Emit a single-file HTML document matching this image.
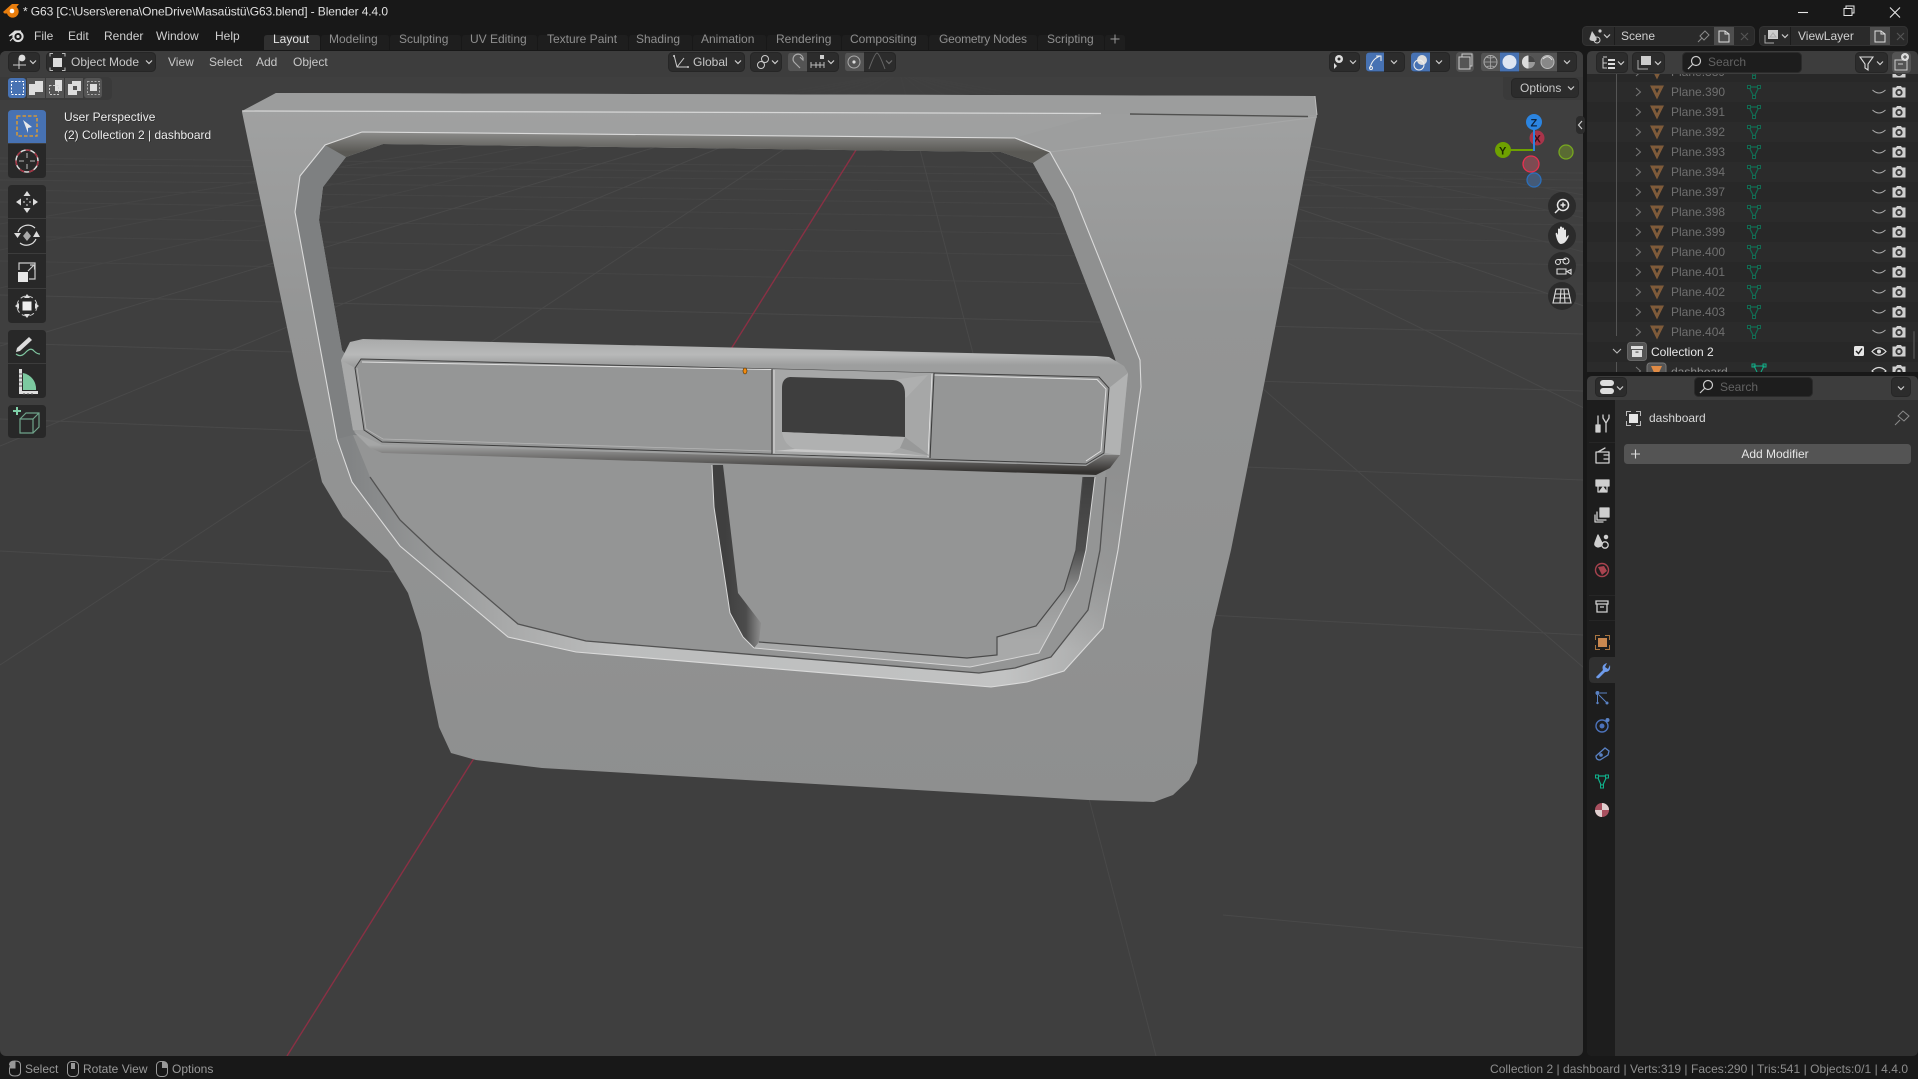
<!DOCTYPE html>
<html lang="en">
<head>
<meta charset="utf-8">
<title>G63 - Blender 4.4.0</title>
<style>
html,body{margin:0;padding:0;background:#181818;width:1918px;height:1079px;overflow:hidden}
svg{display:block;position:absolute;left:0;top:0}
text{font-family:"Liberation Sans",sans-serif;font-size:12px;fill:#c8c8c8}
.tab{fill:#8f8f8f}
.m{fill:#cfcfcf}
.p{fill:#6f6f6f}
.ic{fill:none;stroke:#cfcfcf;stroke-width:1.3;stroke-linecap:round;stroke-linejoin:round}
.blue{fill:#4772b3}
.tool{fill:#282828}
.g1{stroke:#494949;stroke-width:1;fill:none}
.g2{stroke:#454545;stroke-width:1;fill:none}
</style>
</head>
<body>
<svg width="1918" height="1079" viewBox="0 0 1918 1079" xmlns="http://www.w3.org/2000/svg">
<defs>
<linearGradient id="door" x1="0" y1="110" x2="0" y2="800" gradientUnits="userSpaceOnUse"><stop offset="0" stop-color="#a0a1a1"/><stop offset=".3" stop-color="#949595"/><stop offset="1" stop-color="#8e8f8f"/></linearGradient>
<linearGradient id="topBev" x1="0" y1="132" x2="0" y2="152" gradientUnits="userSpaceOnUse"><stop offset="0" stop-color="#8c8c8a"/><stop offset="1" stop-color="#5a5955"/></linearGradient>
<linearGradient id="band" x1="350" y1="0" x2="1120" y2="0" gradientUnits="userSpaceOnUse"><stop offset="0" stop-color="#828485"/><stop offset=".2" stop-color="#a8a9a9"/><stop offset=".35" stop-color="#bcbdbd"/><stop offset=".85" stop-color="#c2c3c3"/><stop offset="1" stop-color="#a4a5a5"/></linearGradient>
<linearGradient id="bandR" x1="0" y1="470" x2="0" y2="650" gradientUnits="userSpaceOnUse"><stop offset="0" stop-color="#8f9090"/><stop offset=".6" stop-color="#8f9090" stop-opacity=".7"/><stop offset="1" stop-color="#8f9090" stop-opacity="0"/></linearGradient>
<linearGradient id="bar" x1="0" y1="339" x2="0" y2="365" gradientUnits="userSpaceOnUse"><stop offset="0" stop-color="#a9aaaa"/><stop offset=".6" stop-color="#b8b9b9"/><stop offset="1" stop-color="#9d9e9e"/></linearGradient>
<linearGradient id="under" x1="0" y1="445" x2="0" y2="472" gradientUnits="userSpaceOnUse"><stop offset="0" stop-color="#a5a6a6"/><stop offset=".5" stop-color="#6b6a69"/><stop offset="1" stop-color="#33312f"/></linearGradient>
<linearGradient id="rGroove" x1="0" y1="477" x2="0" y2="640" gradientUnits="userSpaceOnUse"><stop offset="0" stop-color="#3f3f3f"/><stop offset=".45" stop-color="#4e4e4e"/><stop offset=".75" stop-color="#9a9b9b"/><stop offset="1" stop-color="#a8a9a9"/></linearGradient>
<linearGradient id="lGroove" x1="725" y1="0" x2="760" y2="0" gradientUnits="userSpaceOnUse"><stop offset="0" stop-color="#3f3f3f"/><stop offset=".6" stop-color="#4c4c4c"/><stop offset="1" stop-color="#8a8a8a"/></linearGradient>
<clipPath id="vp"><rect x="0" y="51" width="1583" height="1005" rx="6"/></clipPath>
<clipPath id="ol"><rect x="1587" y="74" width="331" height="298"/></clipPath>
<symbol id="tri" viewBox="0 0 16 16" width="16" height="16"><path d="M1 1.500H15L8 15.500Z M5.800 4.600H10.200L8 9.200Z" fill="#7f5b3a" fill-rule="evenodd"/></symbol>
<symbol id="mesh" viewBox="0 0 16 16" width="16" height="16"><path d="M3 3H13L8 13Z" fill="none" stroke="#126b52" stroke-width="1.200"/><g fill="#262626" stroke="#126b52" stroke-width="1"><rect x="1.500" y="1.500" width="3" height="3"/><rect x="11.500" y="1.500" width="3" height="3"/><rect x="6.500" y="11.500" width="3" height="3"/></g></symbol>
<symbol id="closed" viewBox="0 0 16 16" width="16" height="16"><path d="M1.500 6Q8 12 14.500 6" fill="none" stroke="#a8a8a8" stroke-width="1"/></symbol>
<symbol id="cam" viewBox="0 0 16 16" width="16" height="16"><path d="M1.500 3.500H5L6 2H10L11 3.500H14.500V13.500H1.500Z" fill="#cfcfcf"/><circle cx="8" cy="8.500" r="3.600" fill="#3a3a3a"/><circle cx="8" cy="8.500" r="1.700" fill="#cfcfcf"/></symbol>
<symbol id="chev" viewBox="0 0 10 10" width="10" height="10"><path d="M2 3.500L5 6.500L8 3.500" fill="none" stroke="#cfcfcf" stroke-width="1.200"/></symbol>
<symbol id="chevr" viewBox="0 0 10 10" width="10" height="10"><path d="M3 1L7.500 5L3 9" fill="none" stroke="#7a7a7a" stroke-width="1"/></symbol>
<symbol id="row" viewBox="0 0 331 20" width="331" height="20"><use href="#chevr" x="46" y="5"/><use href="#tri" x="62" y="2"/><use href="#mesh" x="159" y="2"/><use href="#closed" x="284" y="2"/><use href="#cam" x="304" y="2"/></symbol>
</defs>

<!-- window frame -->
<rect width="1918" height="1079" fill="#181818"/>

<!-- title bar -->
<g>
<path d="M3 12L8 7.500L12 4H19L16.500 7A6 6 0 1 1 7 13.500L4.500 13.500Z" fill="#e87d0d"/><circle cx="12" cy="11" r="2.300" fill="#fff"/>
<text x="23" y="15.500" style="fill:#e0e0e0" textLength="365">* G63 [C:\Users\erena\OneDrive\Masaüstü\G63.blend] - Blender 4.4.0</text>
<path d="M1798 12.500H1808" stroke="#e6e6e6" stroke-width="1.100"/>
<path d="M1844 8.500H1852V15.500H1844Z M1846 8.500V6H1854V13H1852" fill="none" stroke="#e6e6e6" stroke-width="1"/>
<path d="M1890 7.500L1900 17.500M1900 7.500L1890 17.500" stroke="#e6e6e6" stroke-width="1.100"/>
</g>

<!-- top bar -->
<g>
<circle cx="18" cy="36.500" r="4.600" fill="none" stroke="#ddd" stroke-width="2"/><path d="M9 36L15 31H21L16 33Z M10 41L14 37" fill="#ddd" stroke="#ddd"/><circle cx="18" cy="36.500" r="1.600" fill="#ddd"/>
<text x="34" y="40" class="m">File</text><text x="68" y="40" class="m">Edit</text><text x="104" y="40" class="m">Render</text><text x="156" y="40" class="m">Window</text><text x="215" y="40" class="m">Help</text>
<path d="M264 50V38Q264 35 267 35H317Q320 35 320 38V50Z" fill="#303030"/>
<g fill="#1e1e1e"><path d="M321 50V38Q321 35 324 35H386Q389 35 389 38V50Z"/><path d="M390 50V38Q390 35 393 35H458Q461 35 461 38V50Z"/><path d="M462 50V38Q462 35 465 35H534Q537 35 537 38V50Z"/><path d="M538 50V38Q538 35 541 35H625Q628 35 628 38V50Z"/><path d="M629 50V38Q629 35 632 35H689Q692 35 692 38V50Z"/><path d="M693 50V38Q693 35 696 35H763Q766 35 766 38V50Z"/><path d="M767 50V38Q767 35 770 35H838Q841 35 841 38V50Z"/><path d="M842 50V38Q842 35 845 35H925Q928 35 928 38V50Z"/><path d="M929 50V38Q929 35 932 35H1034Q1037 35 1037 38V50Z"/><path d="M1038 50V38Q1038 35 1041 35H1101Q1104 35 1104 38V50Z"/><path d="M1105 50V38Q1105 35 1108 35H1122Q1125 35 1125 38V50Z"/></g>
<text x="273" y="43" style="fill:#e4e4e4">Layout</text>
<text x="329" y="43" class="tab">Modeling</text><text x="399" y="43" class="tab">Sculpting</text><text x="470" y="43" class="tab">UV Editing</text><text x="547" y="43" class="tab">Texture Paint</text><text x="636" y="43" class="tab">Shading</text><text x="701" y="43" class="tab">Animation</text><text x="776" y="43" class="tab">Rendering</text><text x="850" y="43" class="tab">Compositing</text><text x="939" y="43" class="tab" textLength="88">Geometry Nodes</text><text x="1047" y="43" class="tab">Scripting</text>
<path d="M1115 34.500V43.500M1110.500 39H1119.500" stroke="#9a9a9a" stroke-width="1"/>
<!-- scene selector -->
<rect x="1582.500" y="26.500" width="172" height="19" rx="4" fill="#2a2a2a" stroke="#333"/>
<path d="M1614.500 27V45" stroke="#1c1c1c"/>
<path d="M1592 31L1596 37Q1598 41 1594 41Q1588 41 1590 37Z" fill="#ccc"/><circle cx="1600" cy="31" r="1.600" fill="#ccc"/><circle cx="1597" cy="40" r="3" fill="none" stroke="#ccc"/>
<use href="#chev" x="1602" y="31"/>
<text x="1621" y="40" style="fill:#d0d0d0">Scene</text>
<path d="M1700 36L1705 31L1709 35L1704 40ZM1698 42L1702 38" fill="none" stroke="#8a8a8a"/>
<rect x="1714" y="27" width="20" height="18" fill="#4e4e4e"/><path d="M1719 31H1725L1729 34V42H1719Z M1725 31V34H1729" fill="none" stroke="#ddd"/>
<path d="M1741 33L1748 40M1748 33L1741 40" stroke="#555" stroke-width="1.200"/>
<rect x="1759.500" y="26.500" width="148" height="19" rx="4" fill="#2a2a2a" stroke="#333"/>
<path d="M1790.500 27V45" stroke="#1c1c1c"/>
<rect x="1768" y="30" width="10" height="9" fill="#ccc"/><path d="M1765 35V43H1774M1770 37L1773 33L1776 37Z" fill="none" stroke="#aaa"/>
<use href="#chev" x="1780" y="31"/>
<text x="1798" y="40" style="fill:#d0d0d0">ViewLayer</text>
<rect x="1870" y="27" width="20" height="18" fill="#4e4e4e"/><path d="M1875 31H1881L1885 34V42H1875Z M1881 31V34H1885" fill="none" stroke="#ddd"/>
<path d="M1897 33L1904 40M1904 33L1897 40" stroke="#555" stroke-width="1.200"/>
</g>

<!-- 3D viewport -->
<g clip-path="url(#vp)">
<rect x="0" y="51" width="1583" height="1005" fill="#3f3f3f"/>
<!-- grid family A -->
<g class="g1">
<path d="M0 551L1584 635M0 419L1584 480M0 343L1584 391M0 295L1584 334"/>
<path d="M1223 915L1584 948"/>
</g>
<g class="g2">
<path d="M0 261L1584 294M0 236L1584 265M0 217L1584 242M0 202L1584 225M0 190L1584 211M0 180L1584 199M0 171L1584 188M0 164L1584 180M0 158L1584 173"/>
</g>
<!-- grid family B -->
<g class="g1">
<path d="M900 73L1156 1056M900 73L1584 668M900 73L1584 408M900 73L1584 306M900 73L0 665M900 73L0 446M900 73L0 346"/>
</g>
<g class="g2">
<path d="M900 73L1584 252M900 73L1584 218M900 73L1584 195M900 73L0 288M900 73L0 250M900 73L0 224"/>
</g>
<rect x="120" y="77" width="1380" height="20" fill="#3f3f3f" opacity=".85"/>
<path d="M856 150L287 1056" stroke="#8a3044" stroke-width="1.400" fill="none"/>

<!-- door -->
<path fill="url(#door)" fill-rule="evenodd" d="M276 93L1315 96L1317 115L1305 173L1265 380L1231 550L1212 630L1197 763L1189 780L1173 795L1154 802L1088 800L542 768L476 760L451 753L439 727L430 683L421 633L408 593L388 560L343 517L322 482L298 380L242 112Z M383 144L1001 152L1033 163L1055 203L1115 358L1125 400L350 400L350 360L342 350L319 220L323 187L346 157Z"/>
<path d="M276 93L1315 96L1317 115L242 111Z" fill="#9c9d9d"/>
<path d="M1015 138L1100 114L1317 116L1050 152Z" fill="#9d9e9e"/>
<path d="M1050 152L1317 117" stroke="#a6a7a7" stroke-width="1" fill="none"/>
<path d="M242 111L1101 113.500" stroke="#d6d6d6" stroke-width="1.200" fill="none"/>
<path d="M1130 114L1308 116.500" stroke="#50504f" stroke-width="1.400" fill="none"/>
<path d="M1315 96L1317 115" stroke="#bcbcbc" stroke-width="1" fill="none"/>

<!-- bevel around window -->
<path fill="#7e8081" fill-rule="evenodd" d="M362 132L1015 138L1050 152L1073 193L1140 360L1141 387L1118 550L1096 477L369 477L352 482L337 439L295 212L300 176L325 145Z M383 144L1001 152L1033 163L1055 203L1115 358L1125 400L350 400L350 360L342 350L319 220L323 187L346 157Z"/>
<path d="M1050 152L1073 193L1140 360L1141 387L1118 550L1096 477L1125 400L1115 358L1055 203L1033 163Z" fill="#8f9090"/>
<path d="M362 132L1015 138L1050 152L1033 163L1001 152L383 144L346 157L325 145Z" fill="url(#topBev)"/>
<!-- lower band -->
<path fill="url(#band)" d="M352 482L400 546L508 637L576 652L991 687L1027 682L1064 671L1103 628L1118 550L1141 387L1106 477L1100 550L1088 610L1051 657L1015 668L979 673L586 641L518 624L435 553L400 520L370 477L353 435L337 439Z"/>
<path fill="url(#bandR)" d="M1106 470L1141 387L1118 550L1103 628L1064 671L1051 657L1088 610L1100 550Z"/>
<!-- lower face -->
<path fill="#949595" d="M353 435L370 477L400 520L435 553L518 624L586 641L979 673L1015 668L1051 657L1088 610L1100 550L1106 470Z"/>
<path d="M370 477L400 520L435 553L518 624L586 641L979 673L1015 668L1051 657L1088 610L1100 550L1106 477" fill="none" stroke="#525252" stroke-width="1.300"/>
<!-- right channel -->
<path fill="url(#rGroove)" d="M1083 477L1095 477L1086 550L1079 580L1039 653L970 667L754 648L759 642L967 658L997 655L997 637L1036 626L1064 590L1076 550Z"/>
<path d="M754 648L970 667L1039 653L1079 580L1086 550L1095 477" fill="none" stroke="#d4d4d4" stroke-width="1"/>
<path d="M759 642L967 658L997 655L997 637L1036 626L1064 590L1076 550L1083 477" fill="none" stroke="#4a4a4a" stroke-width="1.200"/>
<!-- left groove -->
<path fill="url(#lGroove)" d="M712 465L714 507L730 613L743 637L754 648L759 642L761 623L738 593L723 465Z"/>
<path d="M712 465L714 507L730 613L743 637L754 648" fill="none" stroke="#d8d8d8" stroke-width="1"/>
<!-- white contour -->
<path d="M362 132L1015 138L1050 152L1073 193L1140 360L1141 387L1118 550L1103 628L1064 671L1027 682L991 687L576 652L508 637L400 546L352 482L337 439L295 212L300 176L325 145Z" fill="none" stroke="#dadada" stroke-width="1.100"/>

<!-- arm bar -->
<path fill="url(#bar)" d="M363 339L1096 356L1109 357L1124 366L1128 373L1120 455L1110 468L1096 475L382 453L370 448L353 430L341 360L350 342Z"/>
<path d="M341 360L355 368L364 430L353 430Z" fill="#a8a9a9"/>
<path d="M1128 373L1109 388L1104 453L1120 455Z" fill="#b1b2b2"/>
<path d="M361 359L1099 377L1109 388L1104 453L1086 464L382 442L364 430L355 368Z" fill="#959696"/>
<path fill="url(#under)" d="M354 432L382 445L1086 466L1104 455L1120 455L1110 468L1096 475L382 453L370 448Z"/>
<path d="M361 359L1099 377L1109 388L1104 453L1086 464L382 442L364 430L355 368Z" fill="none" stroke="#3f3f3f" stroke-width="1"/>
<path d="M362 362L772 369.500M934 375L1097 379.500L1106 389L1101 451L1086 461" fill="none" stroke="#dedede" stroke-width="1"/>
<path d="M357 368L366 429L383 439L772 451" fill="none" stroke="#b5b5b5" stroke-width=".8"/>
<!-- center section -->
<path d="M772 369L934 373L930 458L772 454Z" fill="#a6a7a7"/>
<path d="M893 380L928 375L906 398Z" fill="#aeafaf"/>
<path d="M772 369V454M934 373L930 458" stroke="#3c3c3c" stroke-width="1.100" fill="none"/>
<path d="M774 370V453M932 374L928 457" stroke="#e6e6e6" stroke-width=".8" fill="none"/>
<path d="M790 377L893 380Q905 381 905 394V437L782 432V388Q782 378 790 377Z" fill="#3e3e3e"/>
<path d="M782 432L905 437L900 448L890 453L795 449Q784 445 782 432Z" fill="#b0b1b1"/>
<path d="M795 449L890 453L930 456L774 451Z" fill="#c8c8c8"/>
<path d="M905 437L930 456L900 448Z" fill="#989999"/>
<ellipse cx="745" cy="371" rx="2" ry="3" fill="#f08a10" stroke="#4a2d00" stroke-width=".6"/>

<!-- tool settings region -->
<path d="M0 51H1583V77H0Z" fill="#3d3d3d"/>
<path d="M0 77H106Q112 77 112 83V95Q112 100 106 100H0Z" fill="#3a3a3a"/>
<path d="M1503 77H1583V100H1509Q1503 100 1503 94Z" fill="#3a3a3a"/>
</g>

<!-- viewport header -->
<g transform="translate(0 -1)">
<rect x="8.500" y="53.500" width="31" height="19" rx="4" fill="#2c2c2c" stroke="#262626"/>
<path d="M13 66H26M19 59V70" stroke="#ccc" fill="none"/><circle cx="22" cy="59" r="3.400" fill="#ddd"/>
<use href="#chev" x="28" y="58"/>
<rect x="46.500" y="53.500" width="109" height="19" rx="4" fill="#2c2c2c" stroke="#262626"/>
<rect x="53" y="59" width="9" height="9" fill="#ddd"/><path d="M50 58V55H53M62 55H65V58M65 69V72H62M53 72H50V69" fill="none" stroke="#bbb" transform="translate(0 -0.500)"/>
<text x="71" y="67">Object Mode</text><use href="#chev" x="144" y="58"/>
<text x="168" y="67">View</text><text x="209" y="67">Select</text><text x="256" y="67">Add</text><text x="293" y="67">Object</text>
<!-- global -->
<rect x="668.500" y="53.500" width="76" height="19" rx="4" fill="#2c2c2c" stroke="#262626"/>
<path d="M674 56L677 68L688 68M677 68L684 59" fill="none" stroke="#ccc"/><circle cx="674" cy="57" r="1" fill="#ccc"/><circle cx="688" cy="68" r="1" fill="#ccc"/>
<text x="693" y="67">Global</text><use href="#chev" x="733" y="58"/>
<rect x="750.500" y="53.500" width="31" height="19" rx="4" fill="#2c2c2c" stroke="#262626"/>
<circle cx="761" cy="66" r="3.500" fill="none" stroke="#ccc"/><circle cx="765" cy="60" r="3.500" fill="none" stroke="#ccc"/><use href="#chev" x="770" y="58"/>
<rect x="788.500" y="53.500" width="50" height="19" rx="4" fill="#2c2c2c" stroke="#262626"/>
<path d="M788 57Q788 53.500 792 53.500H807V72.500H792Q788 72.500 788 69Z" fill="#545454"/>
<path d="M794 63A5 5 0 1 1 803 61L800 58M794 63L800 69" fill="none" stroke="#aaa" stroke-width="1.200"/>
<rect x="820" y="56" width="4" height="4" fill="#ccc"/><path d="M811 66H824M811 63V69M816 63V69M820 63V69M824 63V69" stroke="#bbb" fill="none"/><use href="#chev" x="826" y="58"/>
<rect x="845.500" y="53.500" width="50" height="19" rx="4" fill="#2c2c2c" stroke="#262626"/>
<path d="M845 57Q845 53.500 849 53.500H864V72.500H849Q845 72.500 845 69Z" fill="#545454"/>
<circle cx="854" cy="63" r="6" fill="none" stroke="#aaa"/><circle cx="854" cy="63" r="1.600" fill="#ddd"/>
<path d="M869 70Q875 54 877 54Q879 54 885 70" fill="none" stroke="#666"/><use href="#chev" x="884" y="58" opacity=".4"/>
<!-- right header -->
<rect x="1329.500" y="53.500" width="30" height="19" rx="4" fill="#2c2c2c" stroke="#262626"/>
<circle cx="1339" cy="60" r="4" fill="#ddd"/><circle cx="1339" cy="60" r="1.500" fill="#2c2c2c"/><path d="M1334 64L1334 70L1337 67Z" fill="#ddd"/><use href="#chev" x="1348" y="58"/>
<rect x="1366.500" y="53.500" width="38" height="19" rx="4" fill="#2c2c2c" stroke="#262626"/>
<path d="M1366 57Q1366 53.500 1370 53.500H1384V72.500H1370Q1366 72.500 1366 69Z" class="blue"/>
<path d="M1370 69Q1372 60 1380 57M1376 57H1381V62" fill="none" stroke="#eee"/><circle cx="1371" cy="69" r="1.500" fill="none" stroke="#eee"/><use href="#chev" x="1389" y="58"/>
<rect x="1411.500" y="53.500" width="38" height="19" rx="4" fill="#2c2c2c" stroke="#262626"/>
<path d="M1411 57Q1411 53.500 1415 53.500H1430V72.500H1415Q1411 72.500 1411 69Z" class="blue"/>
<circle cx="1422" cy="61" r="5" fill="#ddd"/><circle cx="1419" cy="66" r="5" fill="none" stroke="#eee"/><use href="#chev" x="1434" y="58"/>
<rect x="1456" y="53" width="18" height="20" rx="4" fill="#545454"/>
<path d="M1459 57H1470V69H1459Z M1462 57V54H1472V66H1470" fill="none" stroke="#ccc" transform="translate(0 1)"/>
<rect x="1481.500" y="53.500" width="95" height="19" rx="4" fill="#2c2c2c" stroke="#262626"/>
<path d="M1481 57Q1481 53.500 1485 53.500H1500V72.500H1485Q1481 72.500 1481 69Z" fill="#545454"/>
<rect x="1500" y="53.500" width="19" height="19" class="blue"/><rect x="1519" y="53.500" width="38" height="19" fill="#545454"/>
<circle cx="1490.500" cy="63" r="6.500" fill="none" stroke="#aaa"/><path d="M1484 63H1497M1490.500 56.500V69.500M1486 58Q1490.500 60 1495 58M1486 68Q1490.500 66 1495 68" fill="none" stroke="#aaa" stroke-width=".8"/>
<circle cx="1509.500" cy="63" r="7" fill="#dfe6f2"/>
<circle cx="1528.500" cy="63" r="6.500" fill="#999"/><path d="M1528.500 56.500A6.500 6.500 0 0 0 1528.500 69.500Z" fill="#ddd"/><path d="M1528.500 56.500A6.500 6.500 0 0 1 1535 63H1528.500Z" fill="#444"/>
<circle cx="1547.500" cy="63" r="6.500" fill="#888" stroke="#bbb"/><path d="M1543 60Q1548 55 1552 61" stroke="#ddd" fill="none"/>
<use href="#chev" x="1562" y="58"/>
</g>
<!-- tool settings -->
<g>
<rect x="8" y="78" width="18" height="20" rx="3" class="blue"/>
<rect x="27" y="78" width="18" height="20" fill="#545454"/><rect x="46" y="78" width="18" height="20" fill="#545454"/><rect x="65" y="78" width="18" height="20" fill="#545454"/><rect x="84" y="78" width="18" height="20" rx="3" fill="#545454"/>
<rect x="11.500" y="81.500" width="12" height="13" fill="none" stroke="#fff" stroke-dasharray="2 1.500"/>
<path d="M29 84H35V81H43V92H35V95H29Z" fill="#ddd"/>
<path d="M55 80H62V91H55Z" fill="#ddd"/><rect x="49.500" y="85.500" width="9" height="9" fill="none" stroke="#ccc" stroke-dasharray="2 1.500"/>
<path d="M68 84H72V81H81V91H77V95H68Z" fill="#ddd"/><rect x="73" y="86" width="4" height="4" fill="#545454"/>
<rect x="87.500" y="81.500" width="12" height="13" fill="none" stroke="#aaa" stroke-dasharray="2 1.500"/><rect x="90" y="84" width="7" height="7" fill="#ddd"/>
</g>
<rect x="1511.500" y="78.500" width="67" height="19" rx="4" fill="#2c2c2c" stroke="#262626"/>
<text x="1520" y="92">Options</text><use href="#chev" x="1566" y="83"/>

<!-- toolbar -->
<g>
<path d="M8 114Q8 110 12 110H42Q46 110 46 114V143H8Z" class="blue"/>
<path d="M8 144H46V174Q46 178 42 178H12Q8 178 8 174Z" class="tool"/>
<rect x="17" y="116" width="20" height="20" fill="none" stroke="#f0a020" stroke-width="1.300" stroke-dasharray="3.500 2"/>
<path d="M23 120L32 127L28 128L28 133Z" fill="#e8e8e8"/>
<circle cx="27" cy="161" r="11" fill="none" stroke="#ddd" stroke-width="1.500"/><circle cx="27" cy="161" r="11" fill="none" stroke="#a03040" stroke-width="1.500" stroke-dasharray="5 5"/><path d="M27 153V158M27 164V169M19 161H24M30 161H35" stroke="#999" stroke-width="1.300"/>
<path d="M8 189Q8 185 12 185H42Q46 185 46 189V319Q46 323 42 323H12Q8 323 8 319Z" class="tool"/>
<path d="M8 218.500H46M8 253.500H46M8 288.500H46" stroke="#3c3c3c"/>
<path d="M27 191L23.500 196H30.500ZM27 213L23.500 208H30.500ZM16 202L21 198.500V205.500ZM38 202L33 198.500V205.500Z" fill="#ddd"/><path d="M27 198V200M27 204V206M23 202H25M29 202H31" stroke="#ddd"/>
<path d="M18 232A10.500 10.500 0 0 1 35 228M36 239A10.500 10.500 0 0 1 20 243" fill="none" stroke="#ddd" stroke-width="1.200"/><path d="M14 233H21L17.500 238ZM33 237H40L36.500 231Z" fill="#ddd"/><path d="M27 231L31 236L27 241L23 236Z" fill="#aaa"/>
<rect x="18" y="272" width="10" height="10" fill="#e6e6e6"/><path d="M19 270V263H35V279H29M28 271L34 265M30 265H34.500V269.500" fill="none" stroke="#ccc" stroke-width="1.200"/>
<circle cx="27" cy="306" r="10" fill="none" stroke="#ccc" stroke-dasharray="5 3"/><rect x="23" y="302" width="8" height="8" fill="#eee" stroke="#eee"/><path d="M27 294L24 298H30ZM27 318L24 314H30ZM15 306L19 303V309ZM39 306L35 303V309Z" fill="#ddd"/>
<path d="M8 334Q8 330 12 330H42Q46 330 46 334V394Q46 398 42 398H12Q8 398 8 394Z" class="tool"/>
<path d="M8 363.500H46" stroke="#3c3c3c"/>
<path d="M17 348L29 337L32 340L20 351L16 352Z" fill="#ddd"/><path d="M16 354Q21 358 26 352Q31 347 34 351Q37 354 40 354" fill="none" stroke="#7fc6a0" stroke-width="1.200"/>
<path d="M19 369H22V391H38V394H19Z" fill="#ddd"/><path d="M23 373A16 16 0 0 1 36 390H23Z" fill="#7cc9a0"/><path d="M19 374H23M19 378H22M19 382H23M19 386H22M24 393V395M28 393V395M32 393V395" stroke="#555"/>
<path d="M8 409Q8 405 12 405H42Q46 405 46 409V434Q46 438 42 438H12Q8 438 8 434Z" class="tool"/>
<path d="M20 419H33V433H20Z M20 419L26 413H39V427L33 433M33 419L39 413" fill="none" stroke="#6fa38a" stroke-width="1.200"/><path d="M17 407V415M13 411H21" stroke="#7fd0a8" stroke-width="2"/>
</g>
<g>
<text x="64" y="121" style="fill:#000" opacity=".55" dx=".6" dy=".6">User Perspective</text>
<text x="64" y="121" style="fill:#f0f0f0">User Perspective</text>
<text x="64" y="139" style="fill:#000" opacity=".55" dx=".6" dy=".6">(2) Collection 2 | dashboard</text>
<text x="64" y="139" style="fill:#f0f0f0">(2) Collection 2 | dashboard</text>
</g>

<!-- gizmo -->
<g>
<rect x="1576" y="116" width="9" height="18" rx="4" fill="#2b2b2b"/><path d="M1582 121L1578.500 125L1582 129" fill="none" stroke="#ccc" stroke-width="1.200"/>
<circle cx="1534" cy="180" r="7" fill="#445a77" stroke="#2b6fbb" stroke-width="1.300"/>
<circle cx="1531" cy="164" r="8" fill="#7d4b52" stroke="#e93050" stroke-width="1.300"/>
<circle cx="1566" cy="152" r="7" fill="#5a6b33" stroke="#77a81f" stroke-width="1.300"/>
<circle cx="1537" cy="138" r="7.500" fill="#a8344a"/>
<text x="1533.500" y="142.500" style="fill:#3a0d17;font-size:11px;font-weight:bold">X</text>
<path d="M1534 150H1508" stroke="#6ea100" stroke-width="2"/><path d="M1534 151V128" stroke="#2b84e0" stroke-width="2"/>
<circle cx="1503" cy="150" r="8" fill="#6ea100"/>
<text x="1499" y="154.500" style="fill:#1c2a00;font-size:11px;font-weight:bold">Y</text>
<circle cx="1534" cy="122" r="8" fill="#2b84e0"/>
<text x="1530.500" y="126.500" style="fill:#0b2442;font-size:11px;font-weight:bold">Z</text>
<circle cx="1562" cy="206" r="14" fill="#2b2b2b"/><circle cx="1562" cy="236" r="14" fill="#2b2b2b"/><circle cx="1562" cy="266" r="14" fill="#2b2b2b"/><circle cx="1562" cy="296" r="14" fill="#2b2b2b"/>
<circle cx="1563" cy="205" r="5.500" fill="none" stroke="#e6e6e6" stroke-width="1.500"/><path d="M1559 209L1555 213M1560.500 205H1565.500M1563 202.500V207.500" stroke="#e6e6e6" stroke-width="1.500" fill="none"/>
<path d="M1556 236Q1555 232 1557 233L1558 235V229Q1559 228 1560 229V234V227Q1561 226 1562 227V234V228Q1563 227 1564 228V235V230Q1565 229 1566 230V238Q1567 236 1568.500 235Q1569 236 1568 238Q1565 244 1561 244Q1558 244 1556 236Z" fill="#e6e6e6"/>
<circle cx="1558" cy="262" r="2.500" fill="none" stroke="#ddd" stroke-width="1.100"/><circle cx="1566" cy="261" r="3" fill="none" stroke="#ddd" stroke-width="1.100"/><path d="M1558 259.500H1566M1557 269H1566V274H1557ZM1567 271.500L1571 269.500V274Z" fill="none" stroke="#ddd" stroke-width="1.100"/>
<path d="M1556 289H1568L1571 303H1553ZM1561 289L1560 303M1564 289L1565 303M1555 294H1569M1554 298H1570" fill="none" stroke="#ddd" stroke-width="1.100"/>
</g>

<!-- outliner -->
<g>
<path d="M1587 57Q1587 51 1593 51H1912Q1918 51 1918 57V366Q1918 372 1912 372H1593Q1587 372 1587 366Z" fill="#282828"/>
<g clip-path="url(#ol)">
<g fill="#2b2b2b"><rect x="1587" y="82" width="331" height="20"/><rect x="1587" y="122" width="331" height="20"/><rect x="1587" y="162" width="331" height="20"/><rect x="1587" y="202" width="331" height="20"/><rect x="1587" y="242" width="331" height="20"/><rect x="1587" y="282" width="331" height="20"/><rect x="1587" y="322" width="331" height="20"/><rect x="1587" y="362" width="331" height="20"/></g>
<path d="M1616.500 74V336M1616.500 362V372" stroke="#555"/>
<use href="#row" x="1587" y="62"/><text x="1671" y="76" class="p">Plane.389</text>
<use href="#row" x="1587" y="82"/><text x="1671" y="96" class="p">Plane.390</text>
<use href="#row" x="1587" y="102"/><text x="1671" y="116" class="p">Plane.391</text>
<use href="#row" x="1587" y="122"/><text x="1671" y="136" class="p">Plane.392</text>
<use href="#row" x="1587" y="142"/><text x="1671" y="156" class="p">Plane.393</text>
<use href="#row" x="1587" y="162"/><text x="1671" y="176" class="p">Plane.394</text>
<use href="#row" x="1587" y="182"/><text x="1671" y="196" class="p">Plane.397</text>
<use href="#row" x="1587" y="202"/><text x="1671" y="216" class="p">Plane.398</text>
<use href="#row" x="1587" y="222"/><text x="1671" y="236" class="p">Plane.399</text>
<use href="#row" x="1587" y="242"/><text x="1671" y="256" class="p">Plane.400</text>
<use href="#row" x="1587" y="262"/><text x="1671" y="276" class="p">Plane.401</text>
<use href="#row" x="1587" y="282"/><text x="1671" y="296" class="p">Plane.402</text>
<use href="#row" x="1587" y="302"/><text x="1671" y="316" class="p">Plane.403</text>
<use href="#row" x="1587" y="322"/><text x="1671" y="336" class="p">Plane.404</text>
<!-- collection 2 -->
<path d="M1613 349L1617 353L1621 349" fill="none" stroke="#bbb" stroke-width="1.100"/>
<rect x="1627.500" y="342.500" width="19" height="18" rx="3" fill="#555" stroke="#666"/>
<rect x="1631" y="346" width="12" height="3" fill="#ddd"/><path d="M1632 350H1642V357H1632Z" fill="#ddd"/><rect x="1635.500" y="351.500" width="3" height="1.200" fill="#555"/>
<text x="1651" y="356" style="fill:#e8e8e8">Collection 2</text>
<rect x="1854" y="346" width="10" height="10" rx="1.500" fill="#e6e6e6"/><path d="M1856 351L1858.500 353.500L1862 348.500" fill="none" stroke="#222" stroke-width="1.500"/>
<path d="M1872 351.500Q1879 344 1886 351.500Q1879 359 1872 351.500Z" fill="none" stroke="#ddd" stroke-width="1.200"/><circle cx="1879" cy="351.500" r="2" fill="#ddd"/>
<use href="#cam" x="1891" y="343"/>
<!-- dashboard -->
<use href="#chevr" x="1633" y="366"/>
<rect x="1647" y="363" width="19" height="18" rx="3" fill="#555" stroke="#777"/>
<path d="M1651 366H1662L1656.500 378Z" fill="#e08b45"/>
<text x="1671" y="376" style="fill:#8a8a8a">dashboard</text>
<path d="M1754 366H1764L1759 376Z" fill="none" stroke="#10b08a"/><rect x="1752" y="364" width="3" height="3" fill="none" stroke="#10b08a"/><rect x="1763" y="364" width="3" height="3" fill="none" stroke="#10b08a"/>
<path d="M1872 371Q1879 364 1886 371Q1879 378 1872 371Z" fill="none" stroke="#ddd" stroke-width="1.200"/>
<use href="#cam" x="1891" y="363"/>
<rect x="1913" y="331" width="2" height="28" rx="1" fill="#444"/>
</g>
<path d="M1587 57Q1587 51 1593 51H1912Q1918 51 1918 57V74H1587Z" fill="#3d3d3d"/>
<!-- outliner header -->
<rect x="1596.500" y="52.500" width="31" height="20" rx="4" fill="#2c2c2c" stroke="#262626"/>
<path d="M1603 57H1607M1603 58V68H1607M1603 63H1607" fill="none" stroke="#ccc"/><rect x="1608" y="59" width="7" height="2" fill="#ddd"/><rect x="1608" y="63" width="7" height="2" fill="#ddd"/><rect x="1608" y="67" width="7" height="2" fill="#ddd"/>
<use href="#chev" x="1616" y="58"/>
<rect x="1632.500" y="52.500" width="32" height="20" rx="4" fill="#2c2c2c" stroke="#262626"/>
<rect x="1641" y="56" width="10" height="9" fill="#ccc"/><path d="M1638 60V69H1648" fill="none" stroke="#aaa"/><use href="#chev" x="1653" y="58"/>
<rect x="1682.500" y="52.500" width="119" height="20" rx="4" fill="#1d1d1d" stroke="#2b2b2b"/>
<circle cx="1696" cy="61" r="4.500" fill="none" stroke="#ccc" stroke-width="1.200"/><path d="M1692.500 64.500L1688 69" stroke="#ccc" stroke-width="1.200"/>
<text x="1708" y="66" style="fill:#626262">Search</text>
<rect x="1855.500" y="52.500" width="32" height="20" rx="4" fill="#2c2c2c" stroke="#262626"/>
<path d="M1860 57H1873L1868 64V70L1865 68V64Z" fill="none" stroke="#ddd" stroke-width="1.100"/><use href="#chev" x="1875" y="58"/>
<rect x="1892" y="52" width="19" height="21" rx="4" fill="#545454"/>
<rect x="1895" y="60" width="12" height="10" fill="none" stroke="#ccc"/><path d="M1898 64H1903" stroke="#ccc"/><circle cx="1905" cy="57" r="4" fill="#ddd"/><path d="M1905 55V59M1903 57H1907" stroke="#444"/>
</g>

<!-- properties -->
<g>
<path d="M1587 382Q1587 376 1593 376H1912Q1918 376 1918 382V1050Q1918 1056 1912 1056H1593Q1587 1056 1587 1050Z" fill="#303030"/>
<path d="M1587 400H1615V1056H1593Q1587 1056 1587 1050Z" fill="#1d1d1d"/>
<path d="M1589 662Q1589 657 1594 657H1615V683H1594Q1589 683 1589 678Z" fill="#303030"/>
<path d="M1587 382Q1587 376 1593 376H1912Q1918 376 1918 382V400H1587Z" fill="#3d3d3d"/>
<rect x="1595.500" y="377.500" width="31" height="19" rx="4" fill="#2c2c2c" stroke="#262626"/>
<rect x="1600" y="380" width="14" height="6" rx="3" fill="#ddd"/><rect x="1600" y="388" width="14" height="6" rx="3" fill="#ddd"/><use href="#chev" x="1615" y="383"/>
<rect x="1694.500" y="377.500" width="118" height="19" rx="4" fill="#1d1d1d" stroke="#2b2b2b"/>
<circle cx="1708" cy="385" r="4.500" fill="none" stroke="#ccc" stroke-width="1.200"/><path d="M1704.500 388.500L1700 393" stroke="#ccc" stroke-width="1.200"/>
<text x="1720" y="391" style="fill:#626262">Search</text>
<rect x="1891.500" y="377.500" width="19" height="19" rx="4" fill="#2c2c2c" stroke="#262626"/><use href="#chev" x="1896" y="383"/>
<!-- header row -->
<rect x="1629" y="414" width="9" height="9" fill="#e6e6e6"/><path d="M1626.500 416V411.500H1631M1636 411.500H1640.500V416M1640.500 421V425.500H1636M1631 425.500H1626.500V421" fill="none" stroke="#bbb"/>
<text x="1649" y="422" style="fill:#d8d8d8">dashboard</text>
<path d="M1898 416L1903 411L1909 416L1904 421ZM1895 425L1900 420" fill="none" stroke="#8a8a8a"/>
<rect x="1624" y="444" width="287" height="20" rx="3.500" fill="#545454"/>
<path d="M1635.500 449.500V458.500M1631 454H1640" stroke="#ddd" stroke-width="1.100"/>
<text x="1775" y="458" text-anchor="middle" style="fill:#e6e6e6">Add Modifier</text>
<!-- tab icons -->
<g class="ic">
<path d="M1606 423V432M1609 415V418L1606 423L1603 418V415"/><path d="M1598 416V424"/><rect x="1596" y="425" width="4" height="7" fill="#cfcfcf"/>
<path d="M1596 452H1609V463H1596ZM1598 452L1605 448M1604 455H1608M1604 459H1608"/>
<path d="M1596 480H1609V486H1596Z" fill="#cfcfcf"/><path d="M1598 486V492H1607V486"/><path d="M1600 491L1603 487L1606 491Z" fill="#cfcfcf"/>
<rect x="1600" y="508" width="9" height="9" fill="#cfcfcf"/><path d="M1597 512V520H1606M1595 515V522H1603"/>
<path d="M1598 535L1602 543Q1603 546 1598 547Q1594 546 1595 543Z" fill="#cfcfcf"/><circle cx="1606" cy="537" r="1.600" fill="#cfcfcf"/><circle cx="1605" cy="545" r="3.200"/>
</g>
<circle cx="1602" cy="570" r="6.500" fill="none" stroke="#a8434f" stroke-width="1.400"/><path d="M1598 567L1604 566L1607 571L1602 575L1600 571Z" fill="#a8434f"/>
<path d="M1596 601H1608V604H1596ZM1597 604V612H1607V604M1600 607H1604" fill="none" stroke="#cfcfcf" stroke-width="1.300"/>
<rect x="1598" y="638" width="9" height="9" fill="#c98850"/><path d="M1595.500 640V635.500H1600M1605 635.500H1609.500V640M1609.500 645V649.500H1605M1600 649.500H1595.500V645" fill="none" stroke="#a87440"/>
<path d="M1596 677L1603 670Q1601 665 1607 663L1605 667L1608 669L1610 665Q1611 672 1605 672L1599 678Q1597 679 1596 677Z" fill="#6e9bea"/>
<circle cx="1597.500" cy="693" r="2" fill="#5a82c4"/><path d="M1600 693H1607M1599 695L1606 702M1597.500 695V702" stroke="#5a82c4" fill="none"/><circle cx="1607" cy="703" r="1.500" fill="#5a82c4"/><circle cx="1597.500" cy="703" r="1.200" fill="#5a82c4"/>
<circle cx="1602" cy="726" r="6" fill="none" stroke="#4c72ba" stroke-width="1.400"/><circle cx="1602" cy="726" r="2.500" fill="#4c72ba"/><circle cx="1607.500" cy="720" r="2" fill="#5a82c4"/>
<path d="M1596 756L1605 748L1609 751L1608 755L1600 760Q1596 760 1596 756Z" fill="none" stroke="#5a82c4" stroke-width="1.300"/><circle cx="1601" cy="755" r="1.800" fill="#5a82c4"/>
<path d="M1597 776H1607L1602 787Z" fill="none" stroke="#10b08a" stroke-width="1.200"/><rect x="1595.500" y="775" width="3" height="3" fill="#1d1d1d" stroke="#10b08a"/><rect x="1605.500" y="775" width="3" height="3" fill="#1d1d1d" stroke="#10b08a"/><rect x="1600.500" y="785" width="3" height="3" fill="#1d1d1d" stroke="#10b08a"/>
<circle cx="1602" cy="810" r="7" fill="#a8505f"/><path d="M1602 803A7 7 0 0 1 1609 810H1602ZM1602 810H1595A7 7 0 0 0 1602 817Z" fill="#e0d0d0"/>
<path d="M1589 442.500H1615M1589 595.500H1615M1589 620.500H1615" stroke="#262626"/>
</g>

<!-- status bar -->
<g>
<path d="M9.500 1065Q9.500 1061 15 1061V1068H9.500V1072Q9.500 1076 15 1076Q20.500 1076 20.500 1072V1065Q20.500 1061 15 1061" fill="none" stroke="#999"/><path d="M9.500 1068V1065Q9.500 1061 15 1061V1068Z" fill="#999"/>
<text x="25" y="1073" style="fill:#9a9a9a">Select</text>
<rect x="67.500" y="1061.500" width="11" height="15" rx="4" fill="none" stroke="#999"/><rect x="71" y="1063" width="4" height="6" fill="#999"/>
<text x="83" y="1073" style="fill:#9a9a9a">Rotate View</text>
<rect x="156.500" y="1061.500" width="11" height="15" rx="4" fill="none" stroke="#999"/><path d="M162 1061.500H164Q167.500 1062 167.500 1065V1068H162Z" fill="#999"/>
<text x="172" y="1073" style="fill:#9a9a9a">Options</text>
<text x="1490" y="1073" style="fill:#8e8e8e" textLength="418">Collection 2 | dashboard | Verts:319 | Faces:290 | Tris:541 | Objects:0/1 | 4.4.0</text>
</g>
</svg>
</body>
</html>
